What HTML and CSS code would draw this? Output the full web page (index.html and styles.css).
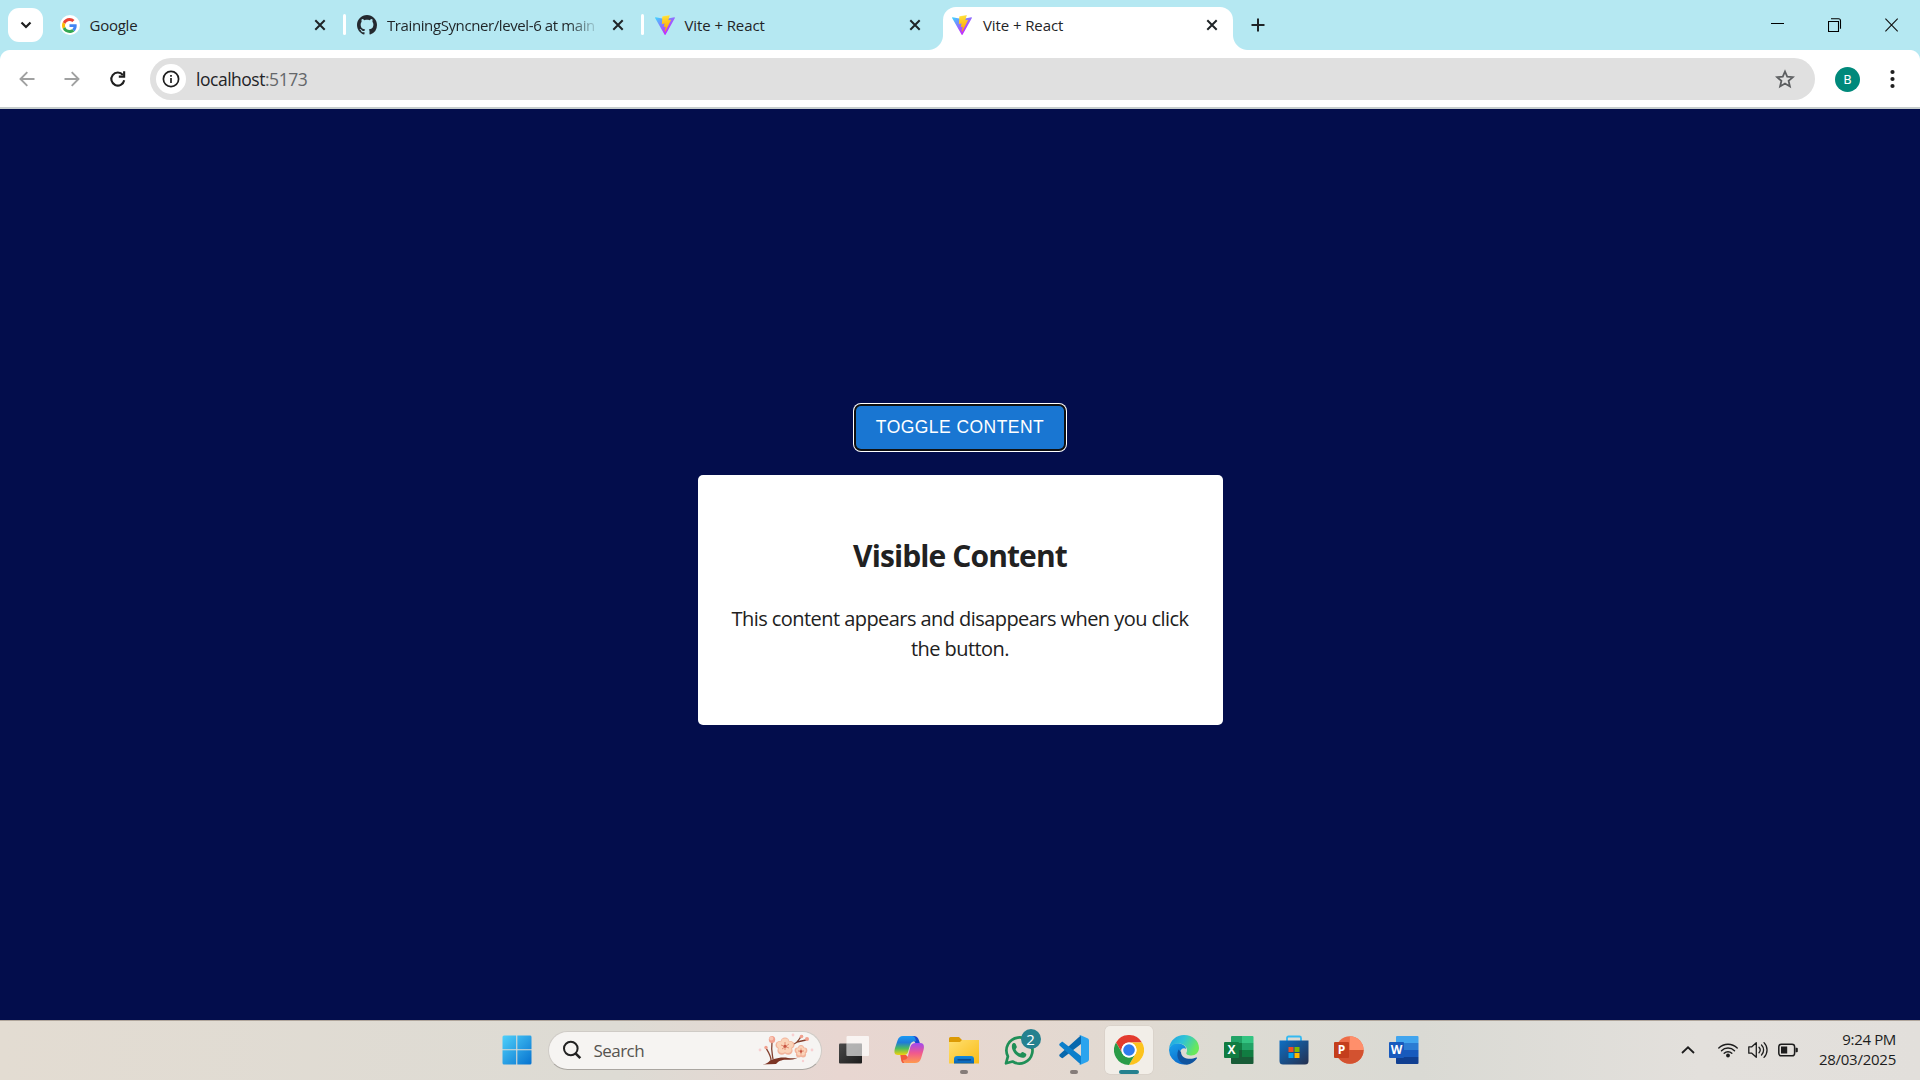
FILE: index.html
```html
<!DOCTYPE html>
<html lang="en">
<head>
<meta charset="utf-8">
<title>Vite + React</title>
<link rel="stylesheet" href="styles.css">
</head>
<body>
<svg class="defs" width="0" height="0" aria-hidden="true">
  <defs>
    <linearGradient id="viteA" x1="-.8%" x2="57.6%" y1="7.5%" y2="78.4%"><stop offset="0" stop-color="#41d1ff"/><stop offset="1" stop-color="#bd34fe"/></linearGradient>
    <linearGradient id="viteB" x1="43.4%" x2="50.3%" y1="2.2%" y2="89%"><stop offset="0" stop-color="#ffea83"/><stop offset=".08" stop-color="#ffdd35"/><stop offset="1" stop-color="#ffa800"/></linearGradient>
    <linearGradient id="win" x1="0" y1="0" x2="1" y2="1"><stop offset="0" stop-color="#4fd0fa"/><stop offset="1" stop-color="#0672cf"/></linearGradient>
    <linearGradient id="dark" x1="0" y1="0" x2="1" y2="1"><stop offset="0" stop-color="#4a4a4a"/><stop offset="1" stop-color="#1c1c1c"/></linearGradient>
    <linearGradient id="copA" x1="0" y1="0" x2="0" y2="1"><stop offset="0" stop-color="#1a9af5"/><stop offset=".35" stop-color="#1f7bd8"/><stop offset=".65" stop-color="#4dbb5e"/><stop offset="1" stop-color="#f3d20c"/></linearGradient>
    <linearGradient id="copB" x1="0" y1="0" x2="0" y2="1"><stop offset="0" stop-color="#a04af0"/><stop offset=".5" stop-color="#f0588e"/><stop offset="1" stop-color="#ff9a4d"/></linearGradient>
    <linearGradient id="fold" x1="0" y1="0" x2="1" y2="1"><stop offset="0" stop-color="#ffdf70"/><stop offset="1" stop-color="#f9bc16"/></linearGradient>
    <linearGradient id="foldB" x1="0" y1="0" x2="0" y2="1"><stop offset="0" stop-color="#1489dc"/><stop offset="1" stop-color="#0b63b4"/></linearGradient>
    <linearGradient id="edgeA" x1="0" y1="0" x2="1" y2=".4"><stop offset="0" stop-color="#1f9ee6"/><stop offset=".5" stop-color="#2fc3d6"/><stop offset="1" stop-color="#69e85a"/></linearGradient>
    <linearGradient id="edgeB" x1="0" y1="0" x2=".6" y2="1"><stop offset="0" stop-color="#1aa4ec"/><stop offset="1" stop-color="#0a66c8"/></linearGradient>
    <linearGradient id="store" x1="0" y1="0" x2="1" y2="1"><stop offset="0" stop-color="#0d6fc4"/><stop offset="1" stop-color="#25304f"/></linearGradient>
    <symbol id="vite" viewBox="0 0 256 257">
      <path fill="url(#viteA)" d="M255.153 37.938L134.897 252.976c-2.483 4.44-8.862 4.466-11.382.048L.875 37.958c-2.746-4.814 1.371-10.646 6.827-9.67l120.385 21.517a6.537 6.537 0 0 0 2.322-.004l117.867-21.483c5.438-.991 9.574 4.796 6.877 9.62Z"/>
      <path fill="url(#viteB)" d="M185.432.063L96.44 17.501a3.268 3.268 0 0 0-2.634 3.014l-5.474 92.456a3.268 3.268 0 0 0 3.997 3.378l24.777-5.718c2.318-.535 4.413 1.507 3.936 3.838l-7.361 36.047c-.495 2.426 1.782 4.5 4.151 3.78l15.304-4.649c2.372-.72 4.652 1.36 4.15 3.788l-11.698 56.621c-.732 3.542 3.979 5.473 5.943 2.437l1.313-2.028l72.516-144.72c1.215-2.423-.88-5.186-3.54-4.672l-25.505 4.922c-2.396.462-4.435-1.77-3.759-4.114l16.646-57.705c.677-2.35-1.37-4.583-3.769-4.113Z"/>
    </symbol>
    <symbol id="x" viewBox="0 0 12 12"><path d="M1.3 1.3l9.4 9.4M10.7 1.3L1.3 10.7" stroke="#1f2427" stroke-width="2" fill="none"/></symbol>
    <g id="flower"><circle cx="0" cy="-5" r="4"/><circle cx="4.800" cy="-1.500" r="4"/><circle cx="3" cy="4.200" r="4"/><circle cx="-3" cy="4.200" r="4"/><circle cx="-4.800" cy="-1.500" r="4"/></g>
  </defs>
</svg>

<header class="tabstrip">
  <button class="tab-search"><svg width="12" height="8" viewBox="0 0 12 8"><path d="M1.500 1.500L6 6l4.500-4.500" fill="none" stroke="#1f1f1f" stroke-width="2.200"/></svg></button>
  <div class="tab">
    <span class="favicon round"><svg width="15" height="15" viewBox="0 0 48 48"><path fill="#EA4335" d="M24 9.500c3.540 0 6.710 1.220 9.210 3.600l6.850-6.850C35.900 2.380 30.470 0 24 0 14.620 0 6.510 5.380 2.560 13.220l7.980 6.190C12.430 13.720 17.740 9.500 24 9.500z"/><path fill="#4285F4" d="M46.980 24.550c0-1.570-.15-3.090-.38-4.550H24v9.020h12.940c-.58 2.960-2.260 5.480-4.780 7.180l7.730 6c4.510-4.180 7.090-10.360 7.090-17.650z"/><path fill="#FBBC05" d="M10.530 28.590c-.48-1.450-.76-2.990-.76-4.590s.27-3.140.76-4.590l-7.980-6.190C.92 16.460 0 20.120 0 24c0 3.880.92 7.540 2.560 10.780l7.970-6.190z"/><path fill="#34A853" d="M24 48c6.480 0 11.930-2.130 15.890-5.810l-7.730-6c-2.150 1.450-4.920 2.300-8.160 2.300-6.260 0-11.570-4.220-13.470-9.910l-7.980 6.190C6.510 42.620 14.620 48 24 48z"/></svg></span>
    <span class="tab-title t-google">Google</span>
    <svg class="close" width="12" height="12"><use href="#x"/></svg>
  </div>
  <div class="tab sep">
    <span class="favicon"><svg width="20" height="20" viewBox="0 0 16 16"><path fill="#24292f" d="M8 0C3.580 0 0 3.580 0 8c0 3.540 2.290 6.530 5.470 7.590.4.070.55-.17.55-.38 0-.19-.010-.82-.010-1.490-2.010.37-2.530-.49-2.690-.94-.09-.23-.48-.94-.82-1.130-.28-.15-.68-.52-.01-.53.63-.01 1.080.58 1.230.82.72 1.210 1.870.87 2.330.66.07-.52.28-.87.51-1.070-1.780-.2-3.640-.89-3.640-3.950 0-.87.31-1.590.82-2.150-.08-.2-.36-1.020.08-2.120 0 0 .67-.21 2.200.82.64-.18 1.320-.27 2-.27s1.360.09 2 .27c1.530-1.040 2.200-.82 2.200-.82.44 1.100.16 1.920.08 2.120.51.56.82 1.270.82 2.150 0 3.070-1.870 3.750-3.650 3.950.29.25.54.73.54 1.480 0 1.070-.01 1.930-.01 2.200 0 .21.15.46.55.38A8.010 8.010 0 0 0 16 8c0-4.420-3.580-8-8-8z"/></svg></span>
    <span class="tab-title faded t-git">TrainingSyncner/level-6 at main</span>
    <svg class="close" width="12" height="12"><use href="#x"/></svg>
  </div>
  <div class="tab sep">
    <span class="favicon"><svg width="20" height="20"><use href="#vite"/></svg></span>
    <span class="tab-title t-vite">Vite + React</span>
    <svg class="close" width="12" height="12"><use href="#x"/></svg>
  </div>
  <div class="tab active">
    <span class="favicon"><svg width="20" height="20"><use href="#vite"/></svg></span>
    <span class="tab-title t-vite">Vite + React</span>
    <svg class="close" width="12" height="12"><use href="#x"/></svg>
  </div>
  <svg class="new-tab" width="14" height="14" viewBox="0 0 14 14"><path d="M7 .5v13M.5 7h13" stroke="#1f2427" stroke-width="2"/></svg>
  <div class="window-controls">
    <svg width="14" height="14" viewBox="0 0 14 14"><path d="M0 5.500h13" stroke="#000"/></svg>
    <svg width="14" height="14" viewBox="0 0 14 14"><path d="M.5 3.500h10v10H.5zM3 .8h7.500q2 0 2 2v8" fill="none" stroke="#000" stroke-width="1.100"/></svg>
    <svg width="14" height="14" viewBox="0 0 14 14"><path d="M.4.700l12.300 12.600M12.700.700L.4 13.300" stroke="#111" stroke-width="1.100"/></svg>
  </div>
</header>

<nav class="toolbar">
  <svg class="nav-icon" width="16" height="16" viewBox="0 0 16 16"><path d="M15.500 8H1.800M8.300 1.200L1.500 8l6.800 6.800" fill="none" stroke="#a0a1a1" stroke-width="1.900"/></svg>
  <svg class="nav-icon" width="16" height="16" viewBox="0 0 16 16"><path d="M.5 8h13.700M7.700 1.200L14.500 8l-6.800 6.800" fill="none" stroke="#a0a1a1" stroke-width="1.900"/></svg>
  <svg class="nav-icon" width="18" height="18" viewBox="0 0 18 18"><path d="M13.900 5A6.500 6.500 0 1 0 15.200 10.300" fill="none" stroke="#1f1f1f" stroke-width="2.100"/><path d="M16.200 1.300v6.400H9.800V5.600h4.300V1.300z" fill="#1f1f1f"/></svg>
  <div class="omnibox">
    <span class="site-info"><svg width="18" height="18" viewBox="0 0 18 18"><circle cx="9" cy="9" r="7.600" fill="none" stroke="#1f1f1f" stroke-width="1.700"/><path d="M9 8v5M9 4.900v1.800" stroke="#1f1f1f" stroke-width="1.700"/></svg></span>
    <span class="url">localhost<span class="port">:5173</span></span>
    <svg class="star" width="20" height="20" viewBox="0 0 20 20"><path d="M10 2.500l2.200 5.200 5.700.5-4.300 3.700 1.300 5.500-4.900-2.900-4.900 2.900 1.300-5.500L2.100 8.200l5.700-.5z" fill="none" stroke="#5c5e60" stroke-width="1.800"/></svg>
  </div>
  <span class="avatar">B</span>
  <svg class="menu" width="5" height="20" viewBox="0 0 5 20"><g fill="#1f1f1f"><circle cx="2.500" cy="3" r="2.100"/><circle cx="2.500" cy="10" r="2.100"/><circle cx="2.500" cy="17" r="2.100"/></g></svg>
</nav>

<main class="page">
  <button class="toggle">TOGGLE CONTENT</button>
  <section class="card">
    <h2>Visible Content</h2>
    <p>This content appears and disappears when you click the button.</p>
  </section>
</main>

<footer class="taskbar">
  <div class="apps">
    <span class="app"><svg width="30" height="30" viewBox="0 0 30 30"><path fill="url(#win)" d="M2 .5h12.200v13.700H.5V2A1.500 1.500 0 0 1 2 .5zM15.300.5H28A1.500 1.500 0 0 1 29.500 2v12.200H15.300zM.5 15.300h13.700v14.200H2A1.500 1.500 0 0 1 .5 28zM15.300 15.300h14.200V28a1.500 1.500 0 0 1-1.500 1.500H15.300z"/></svg></span>
    <div class="search">
      <svg width="20" height="20" viewBox="0 0 20 20"><circle cx="8.800" cy="8.500" r="6.800" fill="none" stroke="#222" stroke-width="2"/><path d="M13.500 13.300l4.800 4.800" stroke="#222" stroke-width="2.600"/></svg>
      <span class="search-text">Search</span>
      <svg class="blossom" width="56" height="34" viewBox="0 0 56 34">
        <path d="M4 31.500c5-.5 6-2 8-4l4-1.500c4-1 9-2 14-1 4 .6 7 .5 10-.5-3 2-7 2.300-12 2.300-5 .2-7 1.200-10 4.200z" fill="#7d3524"/>
        <g fill="none" stroke="#84402e" stroke-linecap="round" stroke-width="1.300"><path d="M13 27c0-4-2-7-5-12M15 26c-1-6-2-9-1-17M36 11c3-1 4-3 6-6l2-2M39 9l9-2"/></g>
        <g fill="#f1a08e"><ellipse cx="14" cy="6.500" rx="3.200" ry="3.600"/><circle cx="8" cy="14.500" r="1.700"/><circle cx="43.500" cy="3.500" r="1.800"/><circle cx="49" cy="6" r="2"/></g>
        <ellipse cx="13.300" cy="5.500" rx="2" ry="2" fill="#f8c6b4"/>
        <g fill="#f2b39a"><use href="#flower" transform="translate(27 13.500) scale(1.080 1)"/><use href="#flower" transform="translate(43 18.500) scale(.72)"/></g>
        <g fill="#fad3b8"><use href="#flower" transform="translate(27 13) scale(.92 .84)"/><use href="#flower" transform="translate(43 18) scale(.56)"/></g>
        <g stroke="#d8735a" stroke-width=".7"><path d="M27 9v8M23 12l8 3M31 11l-7 5M43 15.500v6M40 18h6"/></g>
        <g fill="#c75442"><circle cx="27" cy="13.300" r="1.500"/><circle cx="43" cy="18.500" r="1.200"/></g>
        <g fill="#f8cfd0"><circle cx="2" cy="17" r="1.400"/><circle cx="35" cy="2" r="1.400"/><circle cx="54" cy="17" r="1.400"/><circle cx="45" cy="28" r="1.200"/></g>
      </svg>
    </div>
    <span class="app"><svg width="30" height="30" viewBox="0 0 30 30"><rect x="0" y="8.500" width="23" height="20" rx="1" fill="url(#dark)"/><rect x="7.500" y="1" width="22.500" height="20" rx="1" fill="#fff" fill-opacity=".72"/><path d="M7.500 8.500H23V21H7.500z" fill="#999" fill-opacity=".45"/></svg></span>
    <span class="app"><svg width="30" height="30" viewBox="0 0 30 30"><path d="M20 1h-3l5 8h4c-1-4-2-8-6-8z" fill="#1b47cf"/><path d="M9 1h9c2 0 3 1 3.500 3l.5 2c-3 0-5 1-6 4l-2 7c-1 3-3 3-5 3H4c-4 0-4-3-3-7L3.500 5.500C4.500 2.500 6 1 9 1z" fill="url(#copA)"/><path d="M10 28h-1c-1 0-2-2-2-4l-.7-4H12l3 3z" fill="#f25a3a"/><path d="M21 28h-9c-2 0-3-1-3-3 3 0 4-1 5-4l2.300-9c1-3 2.700-4 5.200-4H26c4 0 4.500 3 3.500 7l-2.500 8.500c-1 3-3 4.500-6 4.500z" fill="url(#copB)"/></svg></span>
    <span class="app"><svg width="30" height="30" viewBox="0 0 30 30"><path d="M0 3.500A1.500 1.500 0 0 1 1.500 2H10l3 3h15.500A1.500 1.500 0 0 1 30 6.500V12H0z" fill="#dc9a04"/><path d="M0 7h11l2-2h17v23.500H0z" fill="url(#fold)"/><path d="M5 28.500V24a3 3 0 0 1 3-3h14a3 3 0 0 1 3 3v4.500z" fill="url(#foldB)"/><path d="M9 24.800h12.500" stroke="#0a3f7c" stroke-width="1.300" stroke-linecap="round"/></svg><i class="dot"></i></span>
    <span class="app"><svg width="30" height="30" viewBox="0 0 30 30"><path d="M2 28.300l1.900-6.900A13 13 0 1 1 8.600 26.500z" fill="none" stroke="#1f8f57" stroke-width="2.700" stroke-linejoin="round"/><path d="M8.200 9.300c.8-1.500 2.800-1.700 3.500-.2l1 2.400c.5 1.200-1 2.100-1.100 2.900 1 2 2.400 3.300 4.600 4.200.8-.2 1.600-2 2.700-1.500l2.700 1.300c1.300.8.7 2.600-.4 3.500-2.300 1.700-5.500.7-8.200-1.300-2.800-2-6.300-6.800-4.800-11.300z" fill="#1f8f57"/></svg><b class="badge">2</b></span>
    <span class="app"><svg width="30" height="30" viewBox="0 0 30 30"><path d="M22 .3L.8 19.200c-.7.700-.7 1.500 0 2.200l1.600 1.400c.6.500 1.200.5 1.800 0L22 9z" fill="#0868ad"/><path d="M22 29.700L.8 10.800c-.7-.7-.7-1.500 0-2.200l1.600-1.400c.6-.5 1.200-.5 1.800 0L22 21z" fill="#0d7fcb"/><path d="M21 0l7.500 3.300A2.500 2.500 0 0 1 30 5.500v19a2.500 2.500 0 0 1-1.500 2.200L21 30c-.5 0-1-.3-1.500-.8.900.8 2.500.2 2.500-1.200V2c0-1.400-1.600-2-2.500-1.200.5-.5 1-.8 1.500-.8z" fill="#2ba4ee"/></svg><i class="dot"></i></span>
    <span class="app current"><svg width="30" height="30" viewBox="0 0 48 48"><circle cx="24" cy="24" r="24" fill="#fff"/><path d="M3.200 12A24 24 0 0 1 44.800 12H24A12 12 0 0 0 13.600 30z" fill="#e33b2e"/><path d="M44.800 12A24 24 0 0 1 24 48L34.400 30A12 12 0 0 0 24 12z" fill="#fcc31e"/><path d="M24 48A24 24 0 0 1 3.200 12L13.600 30A12 12 0 0 0 34.400 30z" fill="#2a9b47"/><circle cx="24" cy="24" r="12" fill="#fff"/><circle cx="24" cy="24" r="9.300" fill="#2f7bee"/></svg><i class="dot"></i></span>
    <span class="app"><svg width="30" height="30" viewBox="0 0 30 30"><path d="M0 15C1 9 6 7.500 11 8.500c4 1 6 3 6 5.500-2-2-6 0-6 4 0 7 8 9.500 16 5.500A15 15 0 0 1 0 15z" fill="url(#edgeB)"/><path d="M9.500 14.500C6 23 11 29 18 29.700 22 29 26 26.500 28 23.200c.3-.7-.2-1-.8-.7C21 25.500 12 23.500 12 17z" fill="#10549f"/><path d="M0 14C1 5 7.500 0 15 0c9 0 15 6 15 13 0 4.500-3.500 7.500-7.500 7.500-3.500 0-6-1.200-5-3 2-3-1-9-8-9C5 8.500 1.500 10.500 0 14z" fill="url(#edgeA)"/></svg></span>
    <span class="app"><svg width="30" height="30" viewBox="0 0 30 30"><path d="M7 2a1 1 0 0 1 1-1h10.500v14H7z" fill="#21a366"/><path d="M18 1h10.500a1 1 0 0 1 1 1v6H18z" fill="#33c481"/><path d="M7 8h11v7H7z" fill="#107c41"/><path d="M18 8h11.500v7H18z" fill="#21a366"/><path d="M7 15h11v7H7z" fill="#185c37"/><path d="M18 15h11.500v7H18z" fill="#107c41"/><path d="M7 22h22.500v6a1 1 0 0 1-1 1H8a1 1 0 0 1-1-1z" fill="#185c37"/><rect y="7" width="15" height="16" rx="1" fill="#107c41"/><text x="7.500" y="19" class="letter">X</text></svg></span>
    <span class="app"><svg width="30" height="30" viewBox="0 0 30 30"><path d="M8 7V3a1.500 1.500 0 0 1 1.500-1.500h11A1.500 1.500 0 0 1 22 3v4" fill="none" stroke="#35b9f1" stroke-width="1.800"/><path d="M.5 5.500h29V26a3.500 3.500 0 0 1-3.500 3.500H4A3.500 3.500 0 0 1 .5 26z" fill="url(#store)"/><path d="M9.500 12h5v5h-5z" fill="#f25022"/><path d="M15.500 12h5v5h-5z" fill="#7fba00"/><path d="M9.500 18h5v5h-5z" fill="#00a4ef"/><path d="M15.500 18h5v5h-5z" fill="#ffb900"/></svg></span>
    <span class="app"><svg width="30" height="30" viewBox="0 0 30 30"><circle cx="15.800" cy="15" r="13.800" fill="#ed6c47"/><path d="M15.800 1.200A13.800 13.800 0 0 1 29.600 15H15.800z" fill="#ff8f6b"/><path d="M2 15h27.600a13.800 13.800 0 0 1-27.600 0z" fill="#d35230"/><rect y="7" width="15" height="16" rx="1" fill="#c43e1c"/><text x="7.500" y="19" class="letter">P</text></svg></span>
    <span class="app"><svg width="30" height="30" viewBox="0 0 30 30"><path d="M7 2a1 1 0 0 1 1-1h20.500a1 1 0 0 1 1 1v6H7z" fill="#41a5ee"/><path d="M7 8h22.500v7H7z" fill="#2b7cd3"/><path d="M7 15h22.500v7H7z" fill="#185abd"/><path d="M7 22h22.500v6a1 1 0 0 1-1 1H8a1 1 0 0 1-1-1z" fill="#103f91"/><rect y="7" width="15" height="16" rx="1" fill="#185abd"/><text x="7.500" y="19" class="letter">W</text></svg></span>
  </div>
  <div class="tray">
    <svg width="14" height="8" viewBox="0 0 14 8"><path d="M1 7l6-5.700L13 7" fill="none" stroke="#1d1d1d" stroke-width="1.800"/></svg>
    <svg class="wifi" width="20" height="16" viewBox="0 0 20 16"><g fill="none" stroke="#1d1d1d" stroke-width="1.400" stroke-linecap="round"><path d="M.8 6a13 13 0 0 1 18.400 0M3.500 8.700a9.200 9.200 0 0 1 13 0M6.200 11.300a5.400 5.400 0 0 1 7.600 0"/></g><circle cx="10" cy="13.500" r="1.900" fill="#1d1d1d"/></svg>
    <svg class="vol" width="20" height="18" viewBox="0 0 20 18"><g fill="none" stroke="#1d1d1d" stroke-width="1.300" stroke-linejoin="round" stroke-linecap="round"><path d="M.8 5.800h3L8.300 1.700v14.600L3.800 12.200h-3z"/><path d="M11 6.300a4 4 0 0 1 0 5.400M13.500 4a7 7 0 0 1 0 10M16 1.600a10.500 10.500 0 0 1 0 14.800"/></g></svg>
    <svg class="batt" width="20" height="14" viewBox="0 0 20 14"><rect x=".8" y="1.200" width="15.800" height="11.600" rx="2.600" fill="none" stroke="#1d1d1d" stroke-width="1.500"/><rect x="3" y="3.500" width="6.200" height="7" fill="#1d1d1d"/><path d="M17.500 4.800h1.300q1 0 1 1v2.400q0 1-1 1h-1.300z" fill="#1d1d1d"/></svg>
    <div class="clock"><span class="time">9:24 PM</span><span class="date">28/03/2025</span></div>
  </div>
</footer>
</body>
</html>
```
FILE: styles.css
```css
* { box-sizing: border-box; }
body { margin: 0; width: 1920px; height: 1080px; overflow: hidden; display: flex; flex-direction: column; font-family: "Open Sans", "Noto Sans", sans-serif; color: #1f2427; background: #030d4c; }
svg { display: block; flex: none; }
.defs { position: absolute; }
button { border: 0; padding: 0; font: inherit; }

.tabstrip { height: 50px; flex: none; display: flex; align-items: center; background: #b5e8f2; padding-left: 8px; }
.tab-search { width: 35px; height: 34px; border-radius: 11px; background: #fff; display: flex; align-items: center; justify-content: center; margin-right: 2.500px; }
.tab { position: relative; width: 297.500px; height: 50px; display: flex; align-items: center; padding: 0 17px 0 14px; font-size: 15px; }
.tab.sep::before { content: ""; position: absolute; left: 0; top: 14px; width: 3px; height: 21px; border-radius: 1.500px; background: #fff; }
.favicon { width: 20px; height: 20px; display: flex; align-items: center; justify-content: center; flex: none; }
.round { background: #fff; border-radius: 50%; }
.tab-title { margin-left: 10px; width: 211px; white-space: nowrap; }
.t-google { letter-spacing: -.25px; }
.t-git { letter-spacing: -.4px; }
.t-vite { letter-spacing: -.1px; }
.faded { -webkit-mask-image: linear-gradient(90deg, #000 86%, transparent 101%); mask-image: linear-gradient(90deg, #000 86%, transparent 101%); }
.close { margin-left: auto; }
.tab.active { width: 290px; height: 43px; align-self: flex-end; background: #fff; border-radius: 13px 13px 0 0; padding: 0 15px 7px 9px; margin-left: 5px; }
.tab.active::before, .tab.active::after { content: ""; position: absolute; bottom: 0; width: 15px; height: 15px; }
.tab.active::before { left: -15px; background: radial-gradient(circle at 0 0, transparent 14.500px, #fff 15.500px); }
.tab.active::after { right: -15px; background: radial-gradient(circle at 100% 0, transparent 14.500px, #fff 15.500px); }
.active .tab-title { margin-left: 11px; }
.new-tab { margin-left: 18px; }
.window-controls { margin-left: auto; display: flex; gap: 43px; padding-right: 21px; }

.toolbar { height: 59px; flex: none; display: flex; align-items: center; background: linear-gradient(#fff, #fff) 0 0 / 100% 57px no-repeat #c6cdcd; padding: 0 25px 1px 19px; position: relative; }
.toolbar::before, .toolbar::after { content: ""; position: absolute; top: 0; width: 10px; height: 10px; }
.toolbar::before { left: 0; background: radial-gradient(circle at 100% 100%, transparent 9.500px, #b5e8f2 10.500px); }
.toolbar::after { right: 0; background: radial-gradient(circle at 0 100%, transparent 9.500px, #b5e8f2 10.500px); }
.nav-icon { margin-right: 29px; }
.nav-icon:nth-child(3) { margin-right: 23px; }
.omnibox { width: 1665px; height: 42px; border-radius: 21px; background: #e0e0e0; display: flex; align-items: center; padding: 0 20px 0 6px; }
.site-info { width: 30px; height: 30px; border-radius: 50%; background: #fff; display: flex; align-items: center; justify-content: center; }
.url { margin-left: 10px; font-size: 17.500px; letter-spacing: -.48px; }
.port { color: #64676a; }
.star { margin-left: auto; }
.avatar { width: 25px; height: 25px; margin-left: 20px; border-radius: 50%; background: #00897b; color: #fff; font: 13px/25px Roboto, sans-serif; text-align: center; }
.menu { margin-left: auto; }

.page { flex: 1; display: flex; flex-direction: column; align-items: center; padding-top: 297px; }
.toggle { width: 208px; height: 43px; border-radius: 5px; background: #1976d2; color: #fff; font: 17.500px/43px "Liberation Sans", Arial, sans-serif; letter-spacing: .45px; box-shadow: 0 0 0 2px #101010, 0 0 0 3px #fff; white-space: nowrap; }
.card { margin-top: 26px; width: 525px; height: 250px; border-radius: 5px; background: #fff; color: #212121; text-align: center; padding: 58px 30px 0; }
.card h2 { margin: 0; font-size: 30px; line-height: 45px; letter-spacing: -.9px; }
.card p { margin: 26px 0 0; font-size: 20px; line-height: 30px; letter-spacing: -.56px; }

.taskbar { height: 60px; flex: none; display: flex; justify-content: space-between; border-top: 1px solid #b0a69c; background: linear-gradient(90deg, #e3dcd2 0, #dddbd4 620px, #e8d6d1 840px, #e5d8d0 1020px, #dddbd3 1220px, #dadad4 1420px, #e3e0dc 1700px, #e2dfdb 1920px); }
.apps { display: flex; align-items: center; padding: 0 0 1px 489.500px; }
.app { position: relative; width: 55px; height: 48px; display: flex; align-items: center; justify-content: center; }
.search { width: 274.500px; height: 39px; margin: 0 4.500px 0 3px; border-radius: 20px; background: #f6f4f2; border: 1px solid #cfcbc6; border-bottom-color: #aaa6a1; display: flex; align-items: center; padding: 0 7px 0 13px; font-size: 17px; color: #55534f; }
.search-text { margin-left: 12px; letter-spacing: -.55px; }
.blossom { margin-left: auto; }
.dot { position: absolute; bottom: 0; width: 8px; height: 4px; border-radius: 2px; background: #857c79; }
.current::before { content: ""; position: absolute; inset: 0 3.500px; border-radius: 5px; background: #f2eee8; box-shadow: 0 0 0 .5px #d3ccc4; }
.current svg { position: relative; }
.current .dot { width: 20px; background: #25818f; }
.badge { position: absolute; right: 6px; top: 3px; width: 20px; height: 20px; border-radius: 50%; background: #25818f; color: #fff; font-weight: 400; font-size: 15px; line-height: 20px; text-align: center; }
.letter { font: bold 12px "Open Sans", sans-serif; fill: #fff; text-anchor: middle; }
.tray { display: flex; align-items: center; padding: 0 24px 2px 0; color: #1d1d1d; }
.wifi { margin-left: 23px; }
.vol { margin-left: 10px; }
.batt { margin-left: 10px; }
.clock { margin-left: 20px; width: 78px; display: flex; flex-direction: column; align-items: flex-end; font-size: 15px; line-height: 20px; white-space: nowrap; padding-bottom: 2px; }
.time { letter-spacing: -.35px; }
.date { letter-spacing: -.25px; }
```
